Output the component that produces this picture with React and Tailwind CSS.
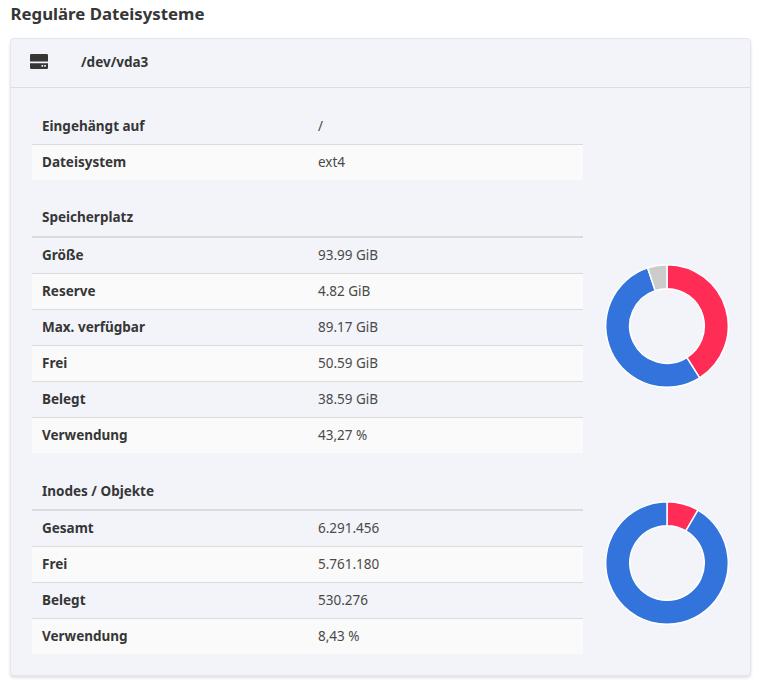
const font = { fontFamily: '"Noto Sans", sans-serif' };

function polar(cx, cy, r, frac) {
  const a = frac * 2 * Math.PI;
  return [cx + r * Math.sin(a), cy - r * Math.cos(a)];
}

function Donut({ parts }) {
  let start = 0;
  const c = 62;
  const R = 61.3;
  const r = 37.3;
  return (
    <svg width="124" height="124" viewBox="0 0 124 124">
      {parts.map(([value, color]) => {
        const end = start + value;
        const [x1, y1] = polar(c, c, R, start);
        const [x2, y2] = polar(c, c, R, end);
        const [x3, y3] = polar(c, c, r, end);
        const [x4, y4] = polar(c, c, r, start);
        const large = value > 0.5 ? 1 : 0;
        const d = `M${x1} ${y1}A${R} ${R} 0 ${large} 1 ${x2} ${y2}L${x3} ${y3}A${r} ${r} 0 ${large} 0 ${x4} ${y4}Z`;
        start = end;
        return <path key={color} d={d} fill={color} stroke="#ffffff" strokeWidth="1.5" strokeLinejoin="round" />;
      })}
    </svg>
  );
}

function Row({ label, value, alt, last, height }) {
  return (
    <div
      className={`grid grid-cols-[276px_1fr] items-center pl-[10px] text-[13.5px] ${height} ${alt ? 'bg-[#fafafa]' : ''} ${last ? '' : 'border-b border-[#dbdbdb]'}`}
    >
      <span className="font-bold text-[#363636]">{label}</span>
      <span className="text-[#4a4a4a]">{value}</span>
    </div>
  );
}

function Section({ title, rows, parts, headPad }) {
  return (
    <div className="flex items-center">
      <div className="w-[551px]">
        <div className={`h-[38px] flex items-center pl-[10px] text-[13.5px] font-bold text-[#363636] border-b-2 border-[#dbdbdb] ${headPad}`}>{title}</div>
        {rows.map(([l, v], i) => (
          <Row
            key={l}
            label={l}
            value={v}
            alt={i % 2 === 1}
            last={i === rows.length - 1}
            height={i === rows.length - 1 ? 'h-[35px]' : 'h-9'}
          />
        ))}
      </div>
      <div className="flex-1 flex justify-center">
        <Donut parts={parts} />
      </div>
    </div>
  );
}

export default function App() {
  return (
    <div className="w-[764px] h-[687px] bg-white overflow-hidden" style={font}>
      <h2 className="pl-[10.5px] pt-[3px] h-[37.5px] text-[16.8px] leading-[22px] font-bold text-[#363636]">Reguläre Dateisysteme</h2>
      <div className="ml-[10px] w-[741px] h-[638.5px] bg-[#f2f4fa] rounded-[4px] border border-[#e4e6ec] shadow-[0_2px_3px_rgba(10,10,10,0.12)]">
        <div className="h-[49px] flex items-center border-b border-[#dbdde2] text-[13.5px] font-bold text-[#363636]">
          <svg className="ml-[19px] mr-[33px] mb-[3px]" width="18" height="15" viewBox="0 0 18 15">
            <path d="M1.3 0h15.4a1.3 1.3 0 0 1 1.3 1.3v6.2H0V1.3A1.3 1.3 0 0 1 1.3 0z" fill="#363636" />
            <path d="M0 9.2h18v4.5a1.3 1.3 0 0 1-1.3 1.3H1.3A1.3 1.3 0 0 1 0 13.7z" fill="#363636" />
            <rect x="11.5" y="11" width="1.7" height="1.7" fill="#f2f4fa" />
            <rect x="14.2" y="11" width="1.7" height="1.7" fill="#f2f4fa" />
          </svg>
          <span className="pb-px">/dev/vda3</span>
        </div>
        <div className="pt-5 pl-[21px] flex flex-col gap-5">
          <div className="w-[551px]">
            <Row label="Eingehängt auf" value="/" height="h-[37px] pt-[2px]" />
            <Row label="Dateisystem" value="ext4" alt last height="h-[35px]" />
          </div>
          <Section
            title="Speicherplatz"
            headPad=""
            parts={[[0.4106, '#ff2d55'], [0.5382, '#3273dc'], [0.0512, '#cccccc']]}
            rows={[
              ['Größe', '93.99 GiB'],
              ['Reserve', '4.82 GiB'],
              ['Max. verfügbar', '89.17 GiB'],
              ['Frei', '50.59 GiB'],
              ['Belegt', '38.59 GiB'],
              ['Verwendung', '43,27 %'],
            ]}
          />
          <Section
            title="Inodes / Objekte"
            headPad="pt-[2px]"
            parts={[[0.0843, '#ff2d55'], [0.9157, '#3273dc']]}
            rows={[
              ['Gesamt', '6.291.456'],
              ['Frei', '5.761.180'],
              ['Belegt', '530.276'],
              ['Verwendung', '8,43 %'],
            ]}
          />
        </div>
      </div>
    </div>
  );
}
